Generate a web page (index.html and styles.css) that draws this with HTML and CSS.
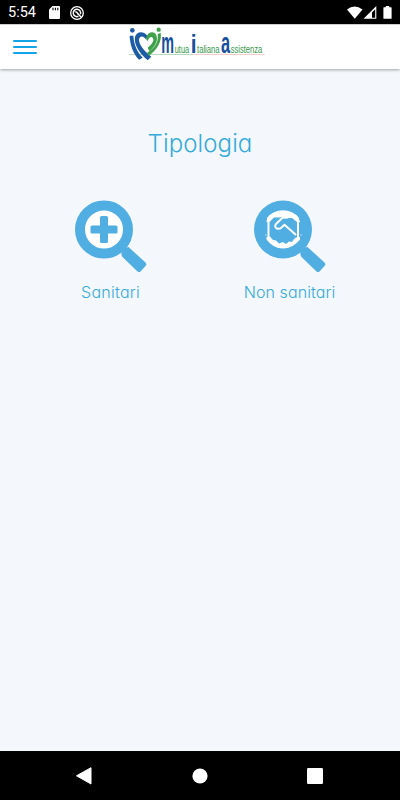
FILE: index.html
```html
<!DOCTYPE html>
<html lang="it">
<head>
    <meta charset="UTF-8">
    <meta name="viewport" content="width=device-width, initial-scale=1.0">
    <title>Mutua Italiana Assistenza - Tipologia</title>
    <link rel="stylesheet" href="styles.css">
</head>
<body>
    <div class="status-bar">
        <span class="clock">5:54</span>
        <svg class="icon-sd" width="11" height="13" viewBox="0 0 11 13">
            <path d="M3.5 0H10a1 1 0 0 1 1 1v11a1 1 0 0 1-1 1H1a1 1 0 0 1-1-1V3.5z" fill="#fff"/>
            <path d="M4 1.7v2.6M6.4 1.7v2.6M8.8 1.7v2.6" stroke="#000" stroke-width="1.1"/>
        </svg>
        <svg class="icon-app" width="14" height="14" viewBox="0 0 14 14" fill="none" stroke="#fff">
            <circle cx="7" cy="7" r="6.3" stroke-width="1.3"/>
            <path d="M8.5 10.3A3.7 3.7 0 1 1 10.4 8.3M5.2 6.2C7 5 7.5 8 8.5 8.3L11 11" stroke-width="1.5"/>
        </svg>
        <svg class="status-icons" width="46" height="14" viewBox="0 0 46 14" fill="#fff">
            <path d="M0 3.5Q7.5-2.3 15.5 3.5L7.75 12.8z"/>
            <path fill-rule="evenodd" d="M29.3 0V12.8H16.5zM28.2 3.2L25 6.4V11.7H28.2z"/>
            <path d="M38.8 1.2V0h3.4v1.2H44a.6.6 0 0 1 .6.6v10.4a.6.6 0 0 1-.6.6h-7a.6.6 0 0 1-.6-.6V1.8a.6.6 0 0 1 .6-.6z"/>
        </svg>
    </div>

    <header class="header">
        <button type="button" class="menu-btn" aria-label="Menu">
            <span></span>
            <span></span>
            <span></span>
        </button>
        <svg class="logo" width="150" height="45" viewBox="0 12 450 135">
            <path d="M27 103.5H220" stroke="#8fc99a" stroke-width="2"/>
            <path d="M220 103.5H434" stroke="#eeb4b4" stroke-width="2"/>
            <g fill="#1d5ba6">
                <circle cx="37" cy="31" r="7"/>
                <path d="M29 47C30 76 40 101 57 119L68 113C52 96 42 76 40 47Z"/>
                <path d="M82 47C70 31 49 34 45 51C41 73 58 100 83 121L94 110C72 94 56 73 57 58C59 46 72 46 79 60Z"/>
            </g>
            <g fill="#3fa14a">
                <circle cx="116" cy="29" r="6.5"/>
                <path d="M78 53C84 36 101 32 108 44C116 60 107 78 88 93L83 83C97 71 104 61 98 53C93 47 86 54 82 64Z"/>
                <path d="M113 43L122 38C126 62 114 87 86 107L81 99C106 82 116 67 113 43Z"/>
            </g>
            <g class="logo-initial">
                <text transform="translate(124 98) scale(.5 1)" font-size="86">m</text>
                <text transform="translate(212 98) scale(.82 1)" font-size="76">i</text>
                <text transform="translate(303 98) scale(.57 1)" font-size="86">a</text>
            </g>
            <g class="logo-word">
                <text transform="translate(164 98) scale(.7 1)">utua</text>
                <text transform="translate(231 98) scale(.72 1)">taliana</text>
                <text transform="translate(332 98) scale(.71 1)">ssistenza</text>
            </g>
        </svg>
    </header>

    <main class="content">
        <h1>Tipologia</h1>
        <div class="types">
            <a href="#" class="type">
                <svg width="72" height="73" viewBox="0 0 72 73">
                    <circle cx="29" cy="29.5" r="24" fill="#fff" stroke="#51aee3" stroke-width="10"/>
                    <path d="M53.5 47L70.5 62.5Q72 64 70.5 66L65.5 71.5Q64 72.5 62.5 71.5L47.5 57Q46 55 46.5 52L49 48Z" fill="#51aee3"/>
                    <path d="M26.5 16h5a1.5 1.5 0 0 1 1.5 1.5v8h8a1.5 1.5 0 0 1 1.5 1.5v5a1.5 1.5 0 0 1-1.5 1.5h-8v8a1.5 1.5 0 0 1-1.5 1.5h-5a1.5 1.5 0 0 1-1.5-1.5v-8h-8a1.5 1.5 0 0 1-1.5-1.5v-5a1.5 1.5 0 0 1 1.5-1.5h8v-8a1.5 1.5 0 0 1 1.5-1.5z" fill="#51aee3"/>
                </svg>
                <span class="type-label label-health">Sanitari</span>
            </a>
            <a href="#" class="type">
                <svg width="72" height="73" viewBox="0 0 72 73">
                    <circle cx="29" cy="29.5" r="29" fill="#51aee3"/>
                    <path d="M53.5 47L70.5 62.5Q72 64 70.5 66L65.5 71.5Q64 72.5 62.5 71.5L47.5 57Q46 55 46.5 52L49 48Z" fill="#51aee3"/>
                    <path d="M13 18Q19 10.3 29 10.3T45 18V20.5H46V22H45V37H46V39.5Q39 48.5 29 48.5T12.5 39.5V37H13.5V22H12.5V20.5H13Z" fill="#fff"/>
                    <path d="M15.5 22L20 17.5H25L29 17L33 18H38L43 22V37L40 39L38 42L35 41.5L32 44L29 42L25 43.5L22 40.5L19 40L15.5 36Z" fill="#51aee3"/>
                    <path d="M33.5 17.5L28.5 17.8L22 24Q20 27 23 28.5Q26 29.5 28 27L30.5 24.7L41.5 34.5" fill="none" stroke="#fff" stroke-width="2" stroke-linecap="round" stroke-linejoin="round"/>
                    <path d="M11.3 35h1M46.5 35h1" stroke="#fff" stroke-width="1.2"/>
                </svg>
                <span class="type-label label-other">Non sanitari</span>
            </a>
        </div>
    </main>

    <nav class="nav-bar">
        <svg width="16" height="18" viewBox="0 0 16 18"><path d="M15 .7V17L.5 8.8z" fill="#fff" stroke="#fff" stroke-linejoin="round"/></svg>
        <svg width="16" height="16" viewBox="0 0 16 16"><circle cx="8" cy="8" r="7.6" fill="#fff"/></svg>
        <svg width="16" height="16" viewBox="0 0 16 16"><rect width="16" height="16" rx="1.3" fill="#fff"/></svg>
    </nav>
</body>
</html>
```
FILE: styles.css
```css
* {
    box-sizing: border-box;
}

body {
    display: flex;
    flex-direction: column;
    height: 100vh;
    margin: 0;
    background-color: #f4f8fd;
    font-family: Inter, "Open Sans", sans-serif;
    overflow: hidden;
}

.status-bar {
    display: flex;
    align-items: center;
    height: 24px;
    padding: 1px 7px 0 8px;
    background-color: #000;
    color: #fff;
}

.clock {
    width: 41px;
    font-family: Roboto, sans-serif;
    font-size: 14.5px;
}

.icon-app {
    margin-left: 10px;
}

.status-icons {
    margin-left: auto;
}

.header {
    display: flex;
    align-items: flex-start;
    height: 45px;
    background-color: #fff;
    border-top: 1px solid #ccc;
    box-shadow: 0 1px 3px rgba(0, 0, 0, 0.35);
}

.menu-btn {
    display: flex;
    flex-direction: column;
    gap: 4px;
    width: 24px;
    margin: 15px 83px 0 13px;
    padding: 0;
    border: none;
    background: none;
}

.menu-btn span {
    height: 2px;
    border-radius: 1px;
    background-color: #12a5e8;
}

.logo {
    margin-top: -1px;
}

.logo-initial {
    fill: #17509e;
    font-family: "Liberation Sans", sans-serif;
    font-weight: bold;
}

.logo-word {
    fill: #36984a;
    font-family: "Liberation Sans", sans-serif;
    font-size: 32px;
}

.content {
    flex: 1;
    padding-top: 60px;
    color: #35aadd;
    font-feature-settings: "cv11";
}

h1 {
    margin: 0;
    font-size: 24px;
    font-weight: 300;
    line-height: 30px;
    letter-spacing: 0.1px;
    text-align: center;
}

.types {
    display: grid;
    grid-template-columns: 1fr 1fr;
    width: 358px;
    margin: 41px auto 0;
}

.type {
    display: flex;
    flex-direction: column;
    align-items: center;
    color: inherit;
    text-decoration: none;
}

.type-label {
    margin-top: 9px;
    font-size: 16px;
    font-weight: 300;
    line-height: 20px;
    white-space: nowrap;
}

.label-health {
    letter-spacing: 0.25px;
}

.label-other {
    letter-spacing: 0.1px;
}

.nav-bar {
    display: flex;
    align-items: center;
    justify-content: space-between;
    height: 49px;
    padding: 0 77px 0 76px;
    background-color: #000;
}
```
